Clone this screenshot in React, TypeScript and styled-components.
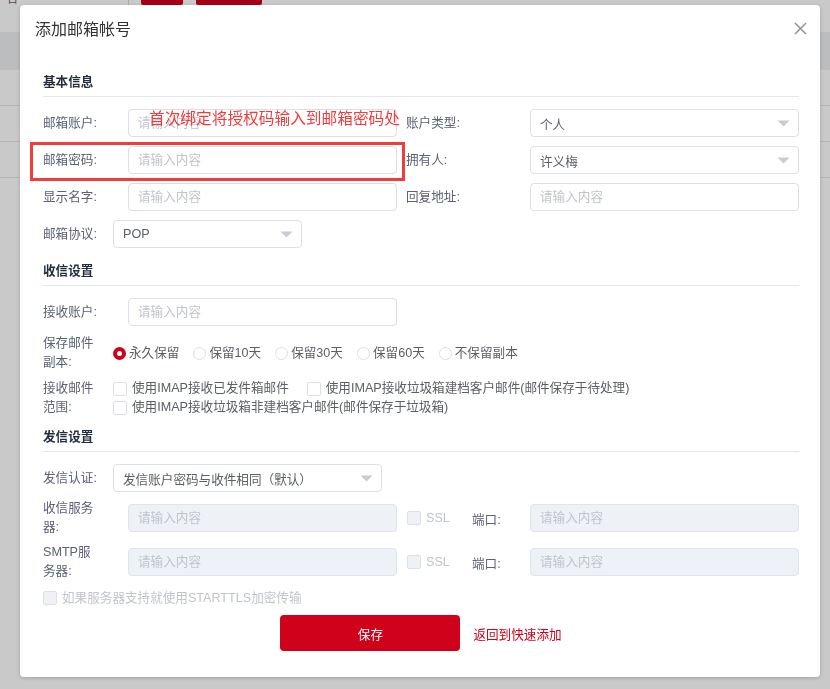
import React from "react";
import styled, { createGlobalStyle } from "styled-components";

const FS = "12.6px";

const Global = createGlobalStyle`
  html, body { margin: 0; padding: 0; }
  body {
    font-family: "Liberation Sans", "Noto Sans CJK SC", sans-serif;
    background: #fff;
    overflow: hidden;
  }
  * { box-sizing: border-box; }
`;

/* ---------- underlying page ---------- */
const Page = styled.div`
  width: 830px;
  height: 689px;
  background: #fff;
  overflow: hidden;
`;

const Toolbar = styled.div`
  display: flex;
  align-items: flex-start;
  height: 26px;
  margin-top: -21px;
  margin-bottom: 27px;
`;

const ToolLeft = styled.div`
  width: 128px;
  display: flex;
  overflow: hidden;
`;

const ToolName = styled.span`
  margin-left: -18px;
  margin-top: 14px;
  font-size: 12px;
  line-height: 12px;
  color: #666;
  white-space: nowrap;
`;

const ToolDivider = styled.div`
  width: 1px;
  height: 33px;
  background: #dcdfe6;
`;

const ToolButton = styled.div<{ $w: number; $ml: number }>`
  width: ${(p) => p.$w}px;
  margin-left: ${(p) => p.$ml}px;
  height: 26px;
  background: #d0021b;
  color: #fff;
  font-size: 12px;
  line-height: 26px;
  text-align: center;
  border-radius: 2px;
`;

const TableHead = styled.div`
  height: 38px;
  background: #eff0f2;
`;

const TableRow = styled.div`
  height: 36px;
  border-bottom: 1px solid #e6e6e6;
`;

/* ---------- overlay & dialog ---------- */
const Overlay = styled.div`
  position: fixed;
  inset: 0;
  background: rgba(0, 0, 0, 0.21);
`;

const Dialog = styled.div`
  position: relative;
  margin: 5px 0 0 20px;
  width: 800px;
  height: 672px;
  background: #fff;
  border-radius: 4px;
  box-shadow: 0 1px 4px rgba(0, 0, 0, 0.2);
`;

const Header = styled.div`
  height: 50px;
  display: flex;
  align-items: center;
  justify-content: space-between;
  padding: 0 13px 0 15px;
`;

const Title = styled.div`
  font-size: 16px;
  line-height: 24px;
  color: #333;
  margin-top: -1px;
`;

const CloseBtn = styled.div`
  width: 14px;
  height: 14px;
  display: flex;
  align-items: center;
  justify-content: center;
  margin-top: -4px;
`;

const Body = styled.div`
  padding: 0 21px 0 23px;
`;

const Heading = styled.div<{ $top: number }>`
  margin-top: ${(p) => p.$top}px;
  font-size: ${FS};
  font-weight: bold;
  line-height: 20px;
  color: #1f2d3d;
  padding-bottom: 4px;
  border-bottom: 1px solid #e4e7ed;
`;

const Row = styled.div<{ $top: number; $h?: number }>`
  display: flex;
  align-items: center;
  margin-top: ${(p) => p.$top}px;
  height: ${(p) => p.$h ?? 28}px;
`;

const Label = styled.div<{ $w: number; $pl?: number }>`
  flex-shrink: 0;
  width: ${(p) => p.$w}px;
  padding-left: ${(p) => p.$pl ?? 0}px;
  padding-right: ${(p) => p.$w - (p.$pl ?? 0) - 58}px;
  font-size: ${FS};
  line-height: 19px;
  color: #5a6275;
`;

const Input = styled.input<{ $w?: number }>`
  width: ${(p) => p.$w ?? 269}px;
  height: 28px;
  flex-shrink: 0;
  border: 1px solid #dcdfe6;
  border-radius: 4px;
  padding: 0 9px;
  font-family: inherit;
  font-size: ${FS};
  color: #5a5e66;
  background: #fff;
  outline: none;
  &::placeholder { color: #c0c4cc; }
  &:disabled {
    background: #eef1f6;
    border-color: #dfe4ed;
  }
`;

const SelectBox = styled.div<{ $w: number }>`
  width: ${(p) => p.$w}px;
  height: 28px;
  flex-shrink: 0;
  border: 1px solid #dcdfe6;
  border-radius: 4px;
  padding: 0 8px 0 9px;
  display: flex;
  align-items: center;
  justify-content: space-between;
  font-size: ${FS};
  color: #5a5e66;
  background: #fff;
`;

const Caret = () => (
  <svg width="13" height="7" viewBox="0 0 13 7">
    <path d="M0.5 0.5 H12.5 L6.5 6.5 Z" fill="#c8ccd4" />
  </svg>
);

const Select = ({ w, value }: { w: number; value: string }) => (
  <SelectBox $w={w}>
    <span>{value}</span>
    <Caret />
  </SelectBox>
);

/* radios */
const RadioGroup = styled.div`
  display: flex;
  align-items: center;
`;

const RadioItem = styled.div`
  display: flex;
  align-items: center;
  margin-right: 14px;
  font-size: ${FS};
  color: #5a5e66;
  line-height: 19px;
`;

const RadioDot = styled.span<{ $on?: boolean }>`
  width: 13px;
  height: 13px;
  border-radius: 50%;
  background: #fff;
  border: ${(p) => (p.$on ? "4px solid #d0021b" : "1px solid #dcdfe6")};
  margin-right: 3px;
  flex-shrink: 0;
`;

/* checkboxes */
const CheckGroup = styled.div`
  display: flex;
  flex-wrap: wrap;
  column-gap: 18px;
  width: 686px;
`;

const CheckItem = styled.div<{ $disabled?: boolean; $w?: number }>`
  display: flex;
  align-items: center;
  height: 19px;
  font-size: ${FS};
  line-height: 19px;
  white-space: nowrap;
  color: ${(p) => (p.$disabled ? "#c0c4cc" : "#5a5e66")};
  ${(p) => (p.$w ? `width: ${p.$w}px;` : "")}
  flex-shrink: 0;
`;

const CheckBox = styled.span<{ $disabled?: boolean }>`
  width: 14px;
  height: 14px;
  border-radius: 2px;
  border: 1px solid #dcdfe6;
  background: ${(p) => (p.$disabled ? "#eef1f6" : "#fff")};
  margin-right: 5px;
  flex-shrink: 0;
`;

const PortSlot = styled.div`
  width: 133px;
  flex-shrink: 0;
  display: flex;
  align-items: center;
  padding-left: 10px;
`;

const PortLabel = styled.div`
  width: 58px;
  font-size: ${FS};
  color: #5a6275;
`;

const Footer = styled.div`
  margin-top: 7px;
  display: flex;
  align-items: center;
  justify-content: center;
  gap: 13px;
`;

const SaveButton = styled.div`
  width: 180px;
  height: 36px;
  border-radius: 4px;
  background: #d0021b;
  color: #fff;
  font-size: ${FS};
  display: flex;
  align-items: center;
  justify-content: center;
`;

const BackLink = styled.div`
  font-size: ${FS};
  color: #d0021b;
`;

/* annotation overlays */
const RedBox = styled.div`
  position: absolute;
  left: 10px;
  top: 137px;
  width: 375px;
  height: 39px;
  border: 3px solid #f33b3b;
  pointer-events: none;
`;

const AnnoText = styled.div`
  position: absolute;
  left: 129px;
  top: 103px;
  font-size: 15.7px;
  line-height: 20px;
  color: #f33b3b;
  white-space: nowrap;
  pointer-events: none;
  font-family: "Noto Sans CJK SC", sans-serif;
`;

const Check = ({ text, disabled, w }: { text: string; disabled?: boolean; w?: number }) => (
  <CheckItem $disabled={disabled} $w={w}>
    <CheckBox $disabled={disabled} />
    {text}
  </CheckItem>
);

const radios = ["永久保留", "保留10天", "保留30天", "保留60天", "不保留副本"];

export default function App() {
  return (
    <>
      <Global />
      <Page>
        <Toolbar>
          <ToolLeft>
            <ToolName>用户名</ToolName>
          </ToolLeft>
          <ToolDivider />
          <ToolButton $w={42} $ml={12}>搜索</ToolButton>
          <ToolButton $w={66} $ml={13}>添加邮箱</ToolButton>
        </Toolbar>
        <TableHead />
        <TableRow />
        <TableRow />
        <TableRow />
      </Page>
      <Overlay>
        <Dialog>
          <Header>
            <Title>添加邮箱帐号</Title>
            <CloseBtn>
              <svg width="13" height="13" viewBox="0 0 13 13">
                <path d="M1 1 L12 12 M12 1 L1 12" stroke="#909399" strokeWidth="1.5" />
              </svg>
            </CloseBtn>
          </Header>
          <Body>
            <Heading $top={17}>基本信息</Heading>
            <Row $top={12}>
              <Label $w={85}>邮箱账户:</Label>
              <Input placeholder="请输入内容" readOnly />
              <Label $w={133} $pl={9}>账户类型:</Label>
              <Select w={269} value="个人" />
            </Row>
            <Row $top={9}>
              <Label $w={85}>邮箱密码:</Label>
              <Input placeholder="请输入内容" readOnly />
              <Label $w={133} $pl={9}>拥有人:</Label>
              <Select w={269} value="许义梅" />
            </Row>
            <Row $top={9}>
              <Label $w={85}>显示名字:</Label>
              <Input placeholder="请输入内容" readOnly />
              <Label $w={133} $pl={9}>回复地址:</Label>
              <Input placeholder="请输入内容" readOnly />
            </Row>
            <Row $top={9}>
              <Label $w={70}>邮箱协议:</Label>
              <Select w={189} value="POP" />
            </Row>

            <Heading $top={13}>收信设置</Heading>
            <Row $top={12}>
              <Label $w={85}>接收账户:</Label>
              <Input placeholder="请输入内容" readOnly />
            </Row>
            <Row $top={8} $h={38}>
              <Label $w={70}>保存邮件副本:</Label>
              <RadioGroup>
                {radios.map((r, i) => (
                  <RadioItem key={r}>
                    <RadioDot $on={i === 0} />
                    {r}
                  </RadioItem>
                ))}
              </RadioGroup>
            </Row>
            <Row $top={7} $h={38}>
              <Label $w={70}>接收邮件范围:</Label>
              <CheckGroup>
                <Check text="使用IMAP接收已发件箱邮件" />
                <Check text="使用IMAP接收垃圾箱建档客户邮件(邮件保存于待处理)" />
                <Check text="使用IMAP接收垃圾箱非建档客户邮件(邮件保存于垃圾箱)" />
              </CheckGroup>
            </Row>

            <Heading $top={10}>发信设置</Heading>
            <Row $top={12}>
              <Label $w={70}>发信认证:</Label>
              <Select w={269} value="发信账户密码与收件相同（默认）" />
            </Row>
            <Row $top={7} $h={38}>
              <Label $w={85}>收信服务器:</Label>
              <Input placeholder="请输入内容" disabled />
              <PortSlot>
                <Check text="SSL" disabled w={65} />
                <PortLabel>端口:</PortLabel>
              </PortSlot>
              <Input placeholder="请输入内容" disabled />
            </Row>
            <Row $top={6} $h={38}>
              <Label $w={85}>SMTP服务器:</Label>
              <Input placeholder="请输入内容" disabled />
              <PortSlot>
                <Check text="SSL" disabled w={65} />
                <PortLabel>端口:</PortLabel>
              </PortSlot>
              <Input placeholder="请输入内容" disabled />
            </Row>
            <Row $top={7} $h={20}>
              <Check text="如果服务器支持就使用STARTTLS加密传输" disabled />
            </Row>
            <Footer>
              <SaveButton>保存</SaveButton>
              <BackLink>返回到快速添加</BackLink>
            </Footer>
          </Body>
          <RedBox />
          <AnnoText>首次绑定将授权码输入到邮箱密码处</AnnoText>
        </Dialog>
      </Overlay>
    </>
  );
}
